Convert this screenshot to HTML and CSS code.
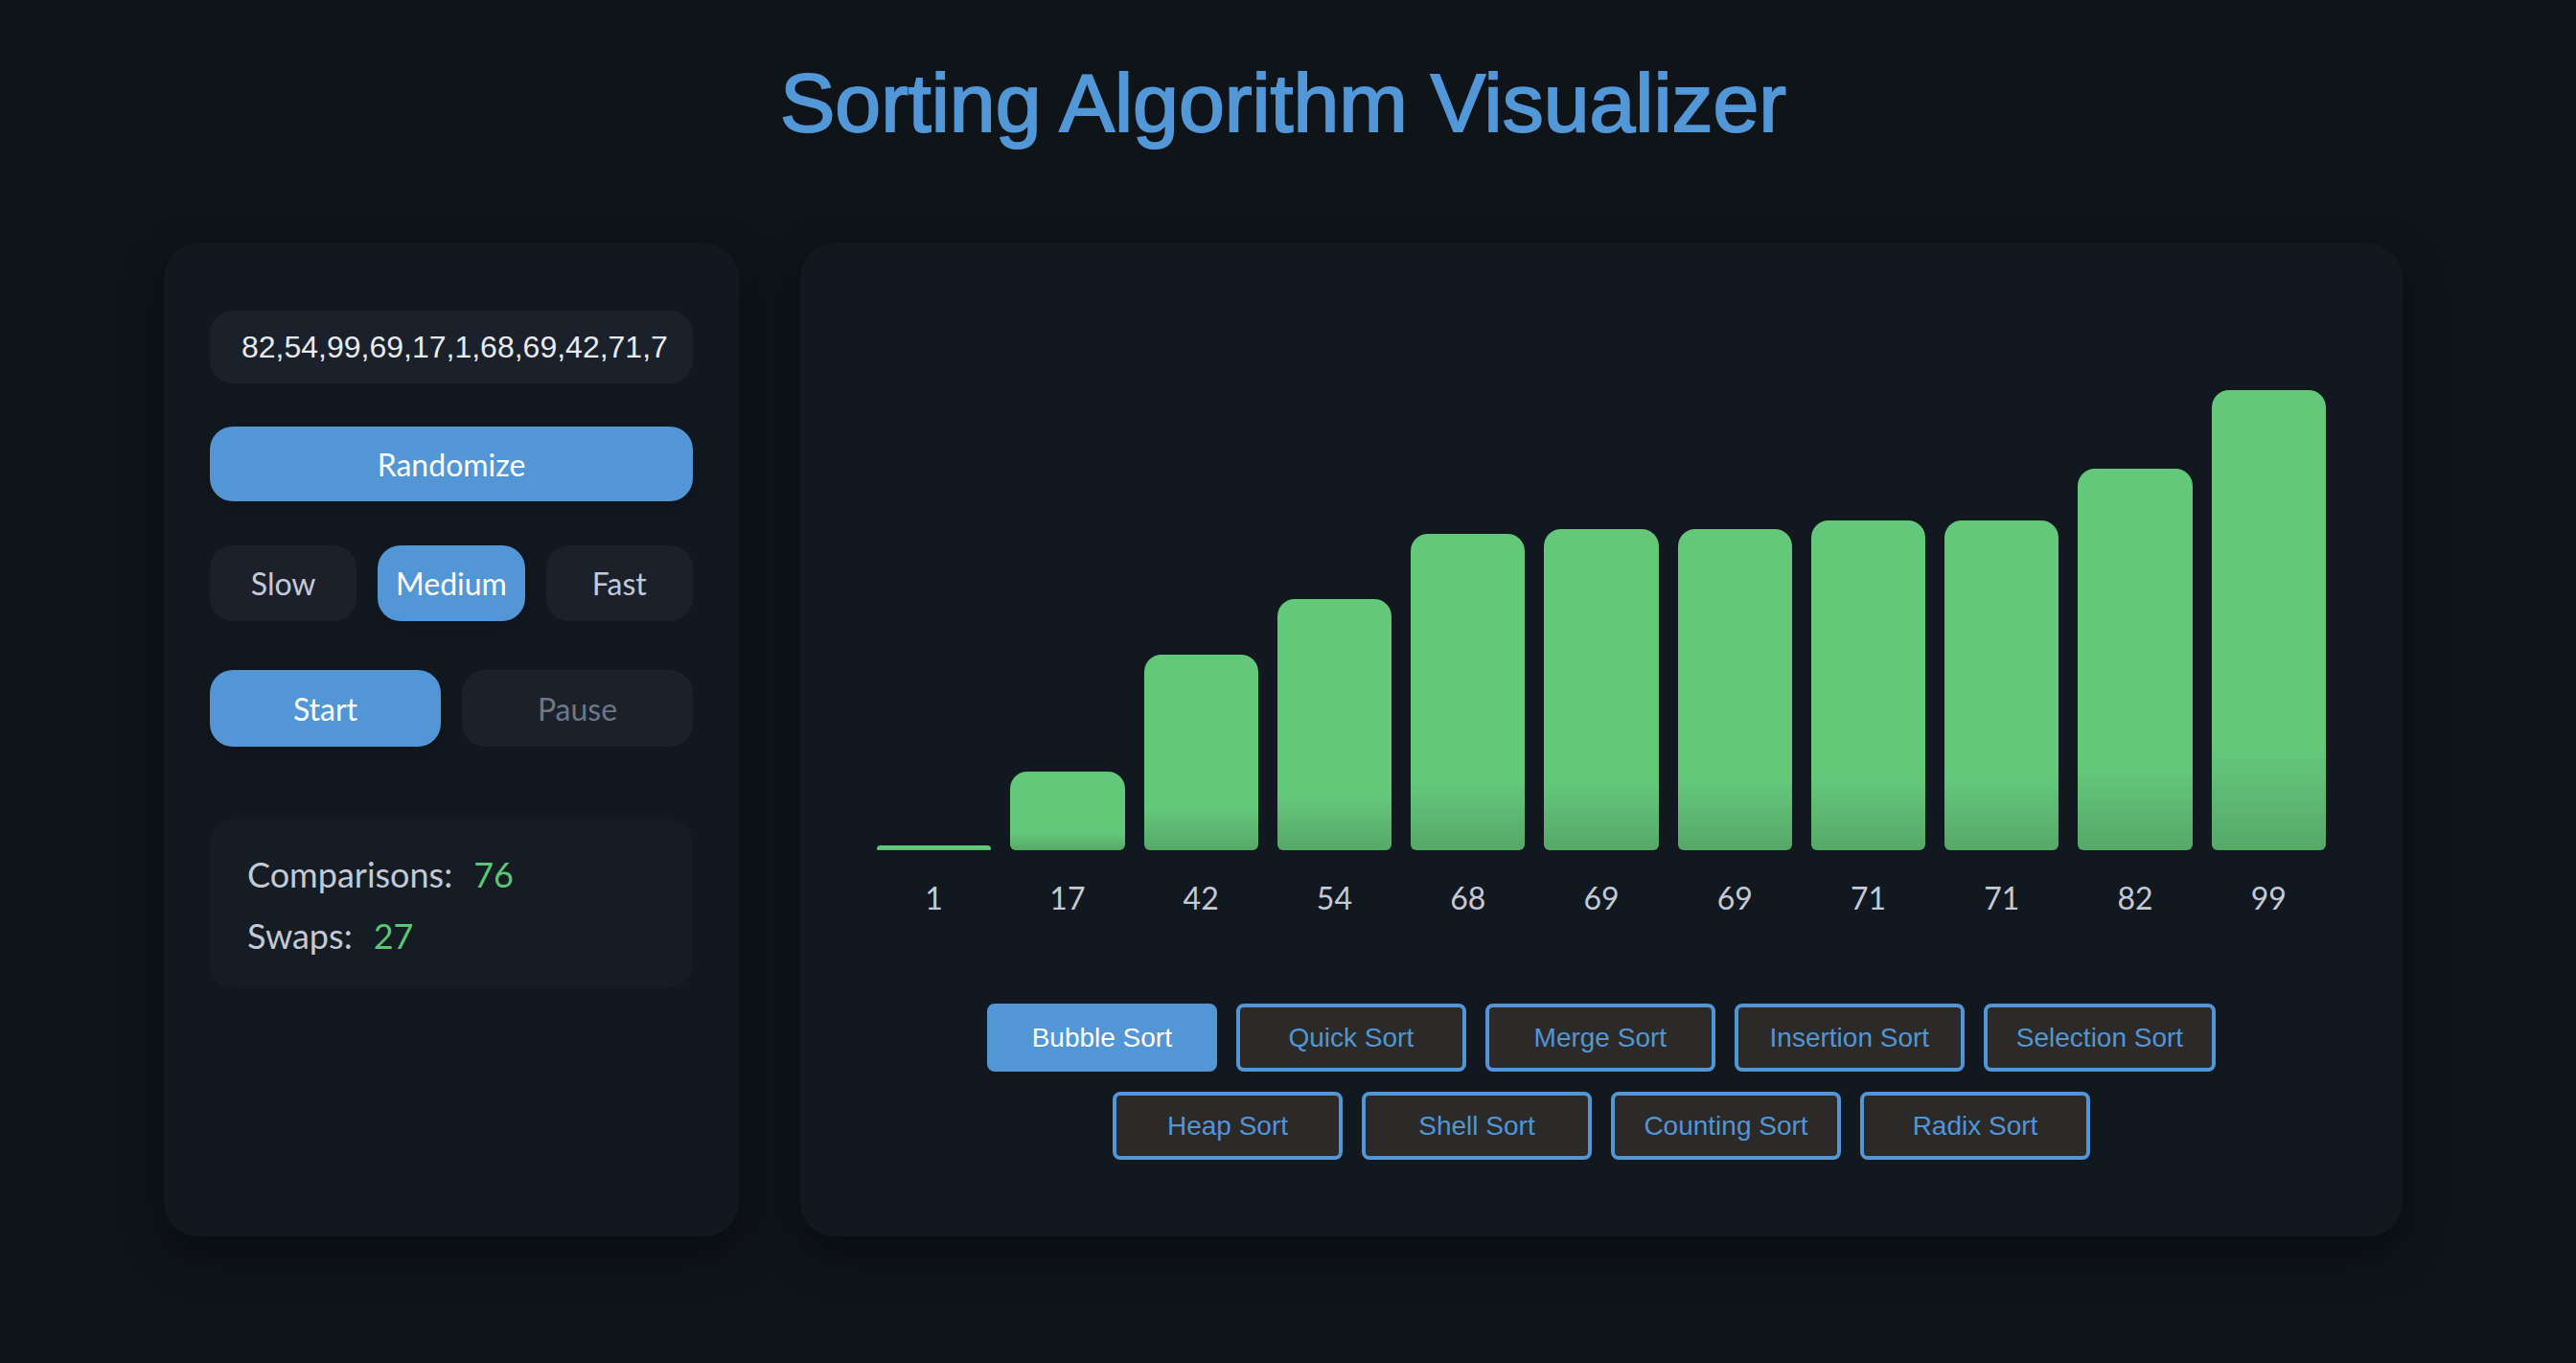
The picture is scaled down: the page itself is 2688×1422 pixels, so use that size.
FILE: index.html
```html
<!DOCTYPE html>
<html lang="en">
<head>
<meta charset="utf-8">
<title>Sorting Algorithm Visualizer</title>
<link rel="stylesheet" href="styles.css">
</head>
<body>
<div class="page">
  <h1 class="title">Sorting Algorithm Visualizer</h1>
  <main class="layout">
    <aside class="panel controls">
      <input class="array-input" type="text" value="82,54,99,69,17,1,68,69,42,71,71">
      <button class="btn btn-primary randomize">Randomize</button>
      <div class="speed-row">
        <button class="btn btn-dark">Slow</button>
        <button class="btn btn-primary">Medium</button>
        <button class="btn btn-dark">Fast</button>
      </div>
      <div class="action-row">
        <button class="btn btn-primary">Start</button>
        <button class="btn btn-dark btn-disabled">Pause</button>
      </div>
      <div class="stats">
        <div class="stat"><span class="stat-label">Comparisons:</span><span class="stat-value">76</span></div>
        <div class="stat"><span class="stat-label">Swaps:</span><span class="stat-value">27</span></div>
      </div>
    </aside>
    <section class="panel visual">
      <div class="bars">
        <div class="bar" style="height:4.85px"></div>
        <div class="bar" style="height:82.45px"></div>
        <div class="bar" style="height:203.7px"></div>
        <div class="bar" style="height:261.9px"></div>
        <div class="bar" style="height:329.8px"></div>
        <div class="bar" style="height:334.65px"></div>
        <div class="bar" style="height:334.65px"></div>
        <div class="bar" style="height:344.35px"></div>
        <div class="bar" style="height:344.35px"></div>
        <div class="bar" style="height:397.7px"></div>
        <div class="bar" style="height:480.15px"></div>
      </div>
      <div class="labels">
        <span>1</span><span>17</span><span>42</span><span>54</span><span>68</span><span>69</span><span>69</span><span>71</span><span>71</span><span>82</span><span>99</span>
      </div>
      <div class="algos">
        <button class="algo active">Bubble Sort</button>
        <button class="algo">Quick Sort</button>
        <button class="algo">Merge Sort</button>
        <button class="algo">Insertion Sort</button>
        <button class="algo">Selection Sort</button>
        <button class="algo">Heap Sort</button>
        <button class="algo">Shell Sort</button>
        <button class="algo">Counting Sort</button>
        <button class="algo">Radix Sort</button>
      </div>
    </section>
  </main>
</div>
</body>
</html>
```
FILE: styles.css
```css
* { box-sizing: border-box; }

html, body {
  margin: 0;
  padding: 0;
  background: #0f1419;
}

body {
  font-family: "Lato", "Liberation Sans", sans-serif;
  color: #c3cad6;
  min-height: 1422px;
}

.page {
  padding: 0 10px 0 0;
}

.title {
  margin: 58px 0 0;
  text-align: center;
  font-family: "Liberation Sans", Arial, sans-serif;
  font-weight: normal;
  font-size: 86px;
  line-height: 99px;
  color: #5297d7;
  -webkit-text-stroke: 2px #5297d7;
}

.layout {
  margin-top: 97px;
  display: flex;
  justify-content: center;
  gap: 64px;
}

.panel {
  background: #121820;
  border-radius: 36px;
  box-shadow: 0 18px 48px rgba(0, 0, 0, 0.38);
}

/* ---------- controls ---------- */
.controls {
  width: 600px;
  padding: 70px 48px 48px;
  display: flex;
  flex-direction: column;
}

.array-input {
  height: 76px;
  width: 100%;
  border: none;
  outline: none;
  border-radius: 24px;
  background: #1b212a;
  color: #e8ebf1;
  font-family: "Liberation Sans", Arial, sans-serif;
  font-size: 32px;
  padding: 0 27px 0 33px;
  margin: 0 0 45px;
}

.btn {
  border: none;
  border-radius: 24px;
  font-family: "Lato", sans-serif;
  font-size: 32px;
  cursor: pointer;
  padding: 0;
}

.btn-primary {
  background: #5296d5;
  color: #ffffff;
  box-shadow: 0 6px 16px rgba(0, 0, 0, 0.18);
}

.btn-dark {
  background: #1b202a;
  color: #c3cad6;
}

.btn-disabled {
  color: #6e7787;
}

.randomize {
  height: 78px;
  width: 100%;
  margin-bottom: 46px;
}

.speed-row {
  display: flex;
  gap: 22px;
  height: 79px;
  margin-bottom: 51px;
}

.speed-row .btn { flex: 1; }

.action-row {
  display: flex;
  gap: 22px;
  height: 80px;
  margin-bottom: 76px;
}

.action-row .btn { flex: 1; }

.stats {
  background: #161c24;
  border-radius: 24px;
  padding: 25px 39px 23px;
  height: 176px;
}

.stat {
  font-size: 36px;
  line-height: 64px;
  color: #c3cad6;
}

.stat-value {
  color: #5cc576;
  margin-left: 22px;
}

/* ---------- visualizer ---------- */
.visual {
  width: 1672px;
  padding: 80px;
  display: flex;
  flex-direction: column;
}

.bars {
  height: 553px;
  display: flex;
  align-items: flex-end;
  gap: 20px;
}

.bar {
  flex: 1;
  border-radius: 18px 18px 6px 6px;
  background: linear-gradient(to top, #56a868 0%, #64c87b 22%, #64c87b 100%);
}

.labels {
  margin-top: 30px;
  display: flex;
  gap: 20px;
  font-size: 32px;
  line-height: 39px;
  color: #c3cad6;
}

.labels span {
  flex: 1;
  text-align: center;
}

.algos {
  margin-top: 91px;
  display: flex;
  flex-wrap: wrap;
  justify-content: center;
  gap: 21px 20px;
}

.algo {
  height: 71px;
  min-width: 240px;
  padding: 0 30px;
  border: 4px solid #5196d6;
  border-radius: 8px;
  background: #2c2a29;
  color: #5196d6;
  font-family: "Liberation Sans", Arial, sans-serif;
  font-size: 28px;
  cursor: pointer;
}

.algo.active {
  background: #5296d5;
  border-color: #5296d5;
  color: #ffffff;
}
```
